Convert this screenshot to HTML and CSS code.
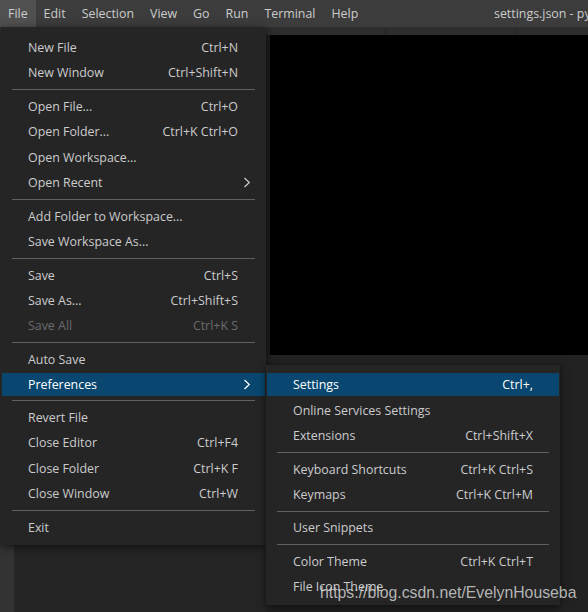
FILE: index.html
```html
<!DOCTYPE html>
<html>
<head>
<meta charset="utf-8">
<link rel="stylesheet" href="styles.css">
</head>
<body>
<div class="titlebar">
  <div class="menubar">
    <div class="mb-item active">File</div>
    <div class="mb-item">Edit</div>
    <div class="mb-item">Selection</div>
    <div class="mb-item">View</div>
    <div class="mb-item">Go</div>
    <div class="mb-item">Run</div>
    <div class="mb-item">Terminal</div>
    <div class="mb-item">Help</div>
  </div>
  <div class="title">settings.json - python - Visual Studio Code</div>
</div>
<div class="workbench">
  <div class="activity"></div>
  <div class="sidebar"></div>
  <div class="editor-area">
    <div class="tabs">
      <div class="tab t1"></div>
      <div class="tab t2"></div>
      <div class="tab t3"></div>
    </div>
    <div class="editor">
      <div class="gutter"></div>
      <div class="code"></div>
    </div>
    <div class="panel"></div>
  </div>
</div>

<div class="menu file-menu">
  <div class="row"><span class="label">New File</span><span class="key">Ctrl+N</span><span class="arrow"></span></div>
  <div class="row"><span class="label">New Window</span><span class="key">Ctrl+Shift+N</span><span class="arrow"></span></div>
  <div class="sep"></div>
  <div class="row"><span class="label">Open File...</span><span class="key">Ctrl+O</span><span class="arrow"></span></div>
  <div class="row"><span class="label">Open Folder...</span><span class="key">Ctrl+K Ctrl+O</span><span class="arrow"></span></div>
  <div class="row"><span class="label">Open Workspace...</span><span class="key"></span><span class="arrow"></span></div>
  <div class="row"><span class="label">Open Recent</span><span class="key"></span><span class="arrow"><svg width="8" height="11" viewBox="0 0 8 11"><polyline points="1.5,1 6.3,5.5 1.5,10" fill="none" stroke="#cccccc" stroke-width="1.2"/></svg></span></div>
  <div class="sep"></div>
  <div class="row"><span class="label">Add Folder to Workspace...</span><span class="key"></span><span class="arrow"></span></div>
  <div class="row"><span class="label">Save Workspace As...</span><span class="key"></span><span class="arrow"></span></div>
  <div class="sep"></div>
  <div class="row"><span class="label">Save</span><span class="key">Ctrl+S</span><span class="arrow"></span></div>
  <div class="row"><span class="label">Save As...</span><span class="key">Ctrl+Shift+S</span><span class="arrow"></span></div>
  <div class="row disabled"><span class="label">Save All</span><span class="key">Ctrl+K S</span><span class="arrow"></span></div>
  <div class="sep"></div>
  <div class="row"><span class="label">Auto Save</span><span class="key"></span><span class="arrow"></span></div>
  <div class="row selected"><span class="label">Preferences</span><span class="key"></span><span class="arrow"><svg width="8" height="11" viewBox="0 0 8 11"><polyline points="1.5,1 6.3,5.5 1.5,10" fill="none" stroke="#ffffff" stroke-width="1.2"/></svg></span></div>
  <div class="sep"></div>
  <div class="row"><span class="label">Revert File</span><span class="key"></span><span class="arrow"></span></div>
  <div class="row"><span class="label">Close Editor</span><span class="key">Ctrl+F4</span><span class="arrow"></span></div>
  <div class="row"><span class="label">Close Folder</span><span class="key">Ctrl+K F</span><span class="arrow"></span></div>
  <div class="row"><span class="label">Close Window</span><span class="key">Ctrl+W</span><span class="arrow"></span></div>
  <div class="sep"></div>
  <div class="row"><span class="label">Exit</span><span class="key"></span><span class="arrow"></span></div>
</div>

<div class="menu sub-menu">
  <div class="row selected"><span class="label">Settings</span><span class="key">Ctrl+,</span></div>
  <div class="row"><span class="label">Online Services Settings</span><span class="key"></span></div>
  <div class="row"><span class="label">Extensions</span><span class="key">Ctrl+Shift+X</span></div>
  <div class="sep"></div>
  <div class="row"><span class="label">Keyboard Shortcuts</span><span class="key">Ctrl+K Ctrl+S</span></div>
  <div class="row"><span class="label">Keymaps</span><span class="key">Ctrl+K Ctrl+M</span></div>
  <div class="sep"></div>
  <div class="row"><span class="label">User Snippets</span><span class="key"></span></div>
  <div class="sep"></div>
  <div class="row"><span class="label">Color Theme</span><span class="key">Ctrl+K Ctrl+T</span></div>
  <div class="row"><span class="label">File Icon Theme</span><span class="key"></span></div>
</div>

<div class="watermark">https://blog.csdn.net/EvelynHouseba</div>
</body>
</html>
```
FILE: styles.css
```css
html, body {
  margin: 0;
  padding: 0;
}
body {
  width: 588px;
  height: 612px;
  overflow: hidden;
  background: #1e1e1e;
  font-family: "Open Sans", "Noto Sans", sans-serif;
  font-size: 12.4px;
  color: #cccccc;
  position: relative;
}
.titlebar {
  height: 27px;
  background: #3c3c3c;
  display: flex;
  align-items: stretch;
  white-space: nowrap;
}
.menubar {
  display: flex;
  width: 494px;
  flex: none;
}
.mb-item {
  padding: 0 8px;
  line-height: 27px;
  color: #cccccc;
}
.mb-item.active {
  background: #505050;
}
.title {
  line-height: 27px;
  overflow: hidden;
  flex: 1;
  min-width: 0;
  color: #cccccc;
}
.workbench {
  display: flex;
  height: 585px;
}
.activity {
  width: 14px;
  background: #333333;
}
.sidebar {
  width: 252px;
  background: #252526;
}
.editor-area {
  flex: 1;
  display: flex;
  flex-direction: column;
}
.tabs {
  height: 8px;
  display: flex;
  background: #252526;
  gap: 1px;
}
.tab {
  background: #2d2d2d;
}
.t1 { width: 119px; }
.t2 { width: 130px; }
.t3 { flex: 1; }
.editor {
  height: 320px;
  display: flex;
}
.gutter {
  width: 4px;
  background: #1e1e1e;
}
.code {
  flex: 1;
  background: #000000;
}
.panel {
  flex: 1;
  background: #222222;
}
.menu {
  position: absolute;
  background: #252526;
  box-shadow: 0 2px 8px rgba(0, 0, 0, 0.6);
}
.file-menu {
  left: 1px;
  top: 27px;
  width: 265px;
  padding: 7.8px 0 5.3px;
}
.sub-menu {
  left: 266px;
  top: 365px;
  width: 294px;
  padding: 7.3px 0 5.3px;
}
.row {
  display: flex;
  align-items: center;
  height: 25.33px;
  margin: 0 1px;
  padding-left: 26px;
  white-space: nowrap;
}
.file-menu .row {
  padding-right: 0;
}
.sub-menu .row {
  padding-right: 26px;
}
.row .label {
  flex: 1;
}
.row .key {
  flex: none;
}
.row .arrow {
  width: 27px;
  flex: none;
  display: flex;
  align-items: center;
  padding-left: 5px;
  box-sizing: border-box;
}
.row.selected {
  background: #094771;
  color: #ffffff;
  height: 23px;
  margin-top: 1.17px;
  margin-bottom: 1.16px;
}
.row.disabled {
  color: #6b6b6b;
}
.sep {
  height: 1px;
  background: #606060;
  margin: 3.7px 11px 3.7px 11px;
}
.sub-menu .sep {
  margin: 3.6px 11px;
}
.watermark {
  position: absolute;
  left: 320px;
  top: 583.5px;
  line-height: 18px;
  font-family: "Liberation Sans", Arial, sans-serif;
  font-size: 15.8px;
  color: rgba(215, 215, 215, 0.82);
  white-space: nowrap;
}
```
